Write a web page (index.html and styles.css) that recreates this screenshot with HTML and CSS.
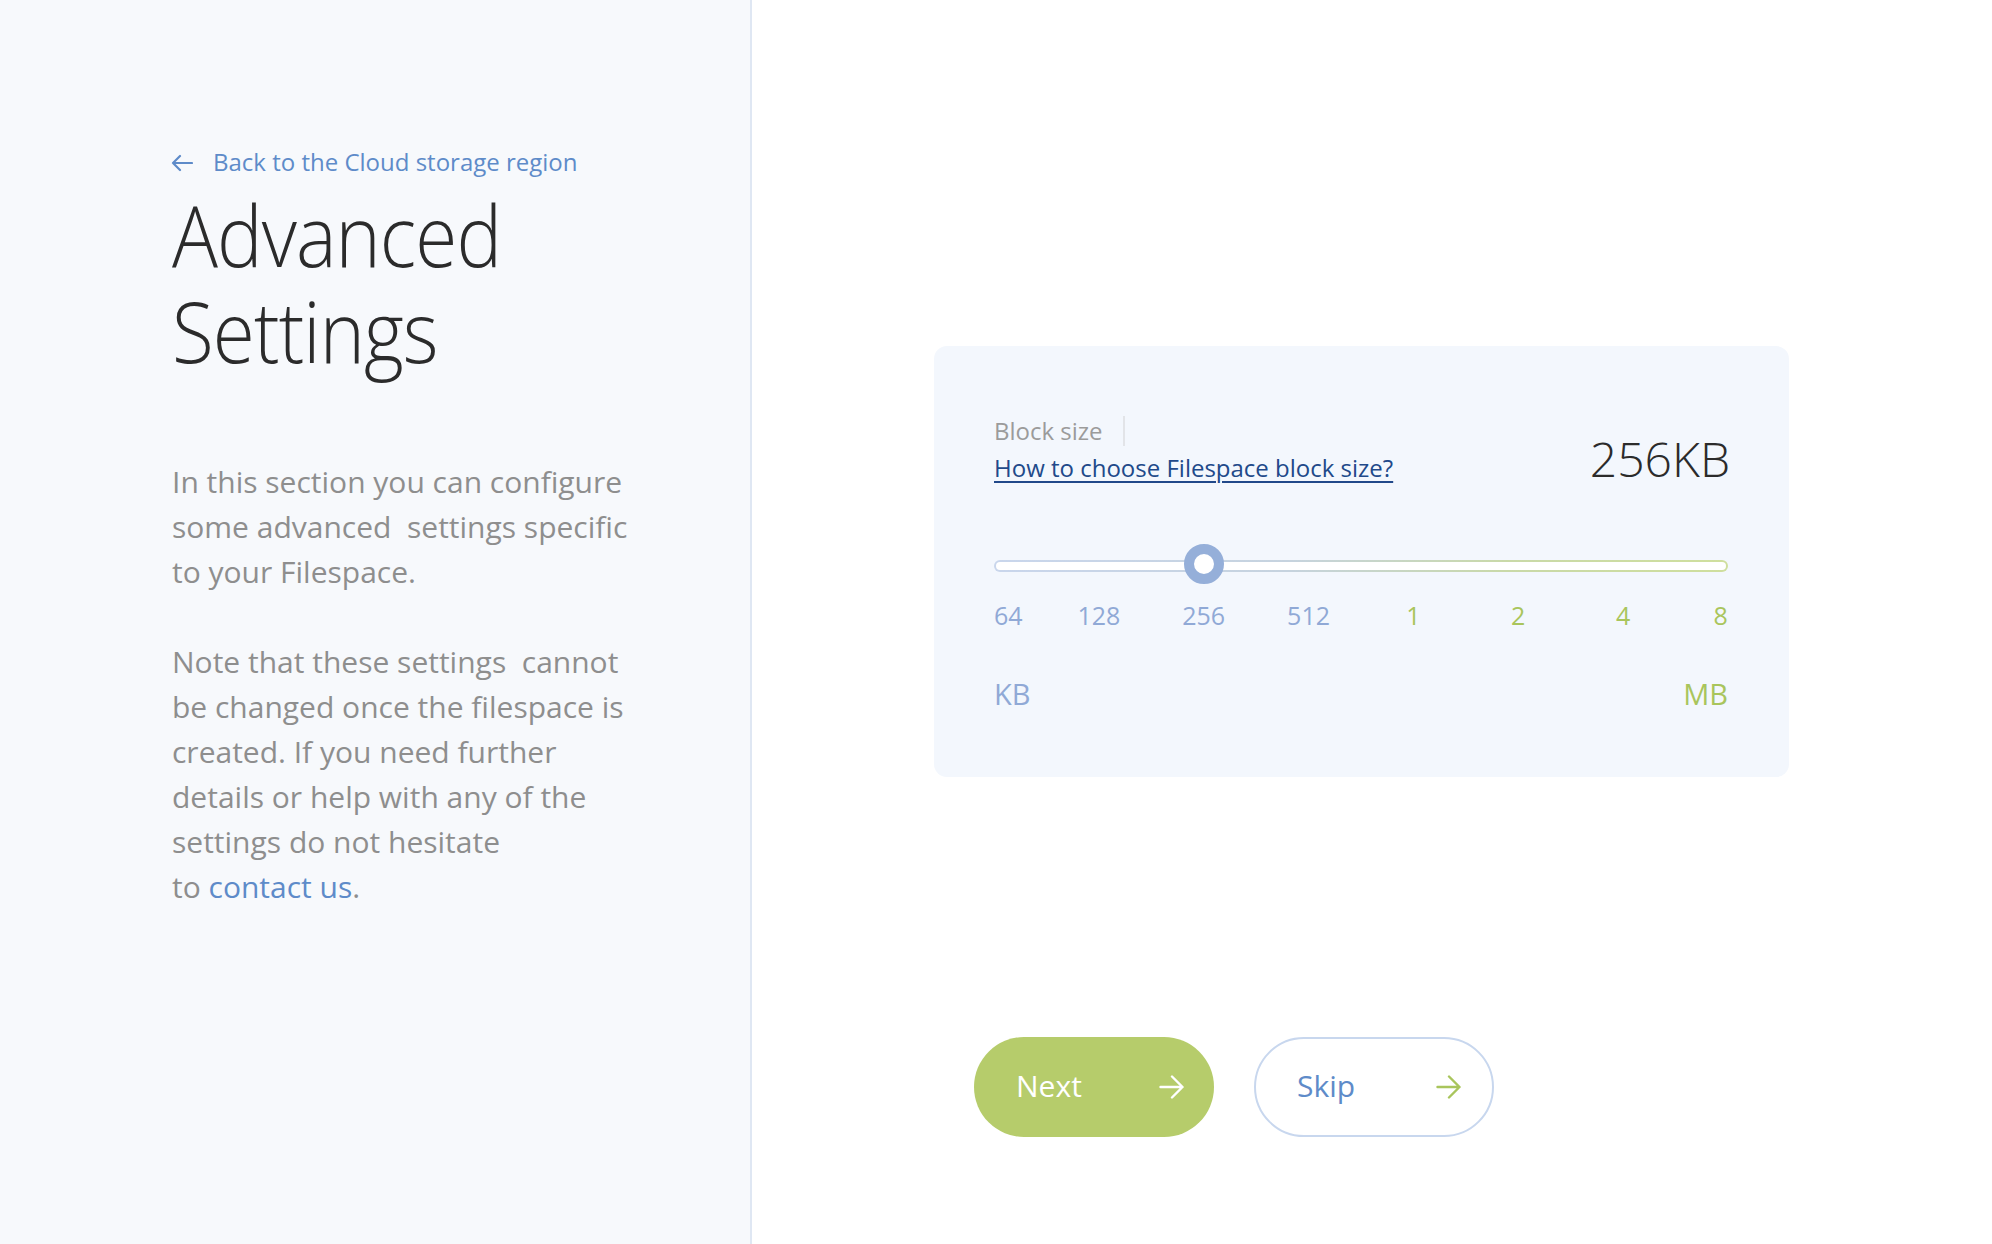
FILE: index.html
```html
<!DOCTYPE html>
<html lang="en">
<head>
<meta charset="utf-8">
<title>Advanced Settings</title>
<link rel="stylesheet" href="styles.css">
</head>
<body>
<div class="page">
  <aside class="side">
    <a class="back" href="#">
      <svg class="back-icon" width="22" height="18" viewBox="0 0 22 18" fill="none" stroke="currentColor" stroke-width="2.2" stroke-linecap="round" stroke-linejoin="round"><path d="M21 9H2M9 2L2 9l7 7"/></svg>
      <span>Back to the Cloud storage region</span>
    </a>
    <h1 class="title">Advanced<br>Settings</h1>
    <p class="text">In this section you can configure<br>some advanced&nbsp; settings specific<br>to your Filespace.</p>
    <p class="text">Note that these settings&nbsp; cannot<br>be changed once the filespace is<br>created. If you need further<br>details or help with any of the<br>settings do not hesitate<br>to <a class="inline-link" href="#">contact us</a>.</p>
  </aside>
  <main class="main">
    <section class="card">
      <div class="card-head">
        <div class="head-left">
          <div class="label-row"><span class="label">Block size</span><span class="divider"></span></div>
          <a class="help" href="#">How to choose Filespace block size?</a>
        </div>
        <div class="value">256KB</div>
      </div>
      <div class="slider">
        <div class="track"><div class="track-inner"></div></div>
        <div class="thumb" style="left: 28.571%"></div>
      </div>
      <div class="ticks">
        <span class="tick kb first"><span>64</span></span>
        <span class="tick kb"><span>128</span></span>
        <span class="tick kb"><span>256</span></span>
        <span class="tick kb"><span>512</span></span>
        <span class="tick mb"><span>1</span></span>
        <span class="tick mb"><span>2</span></span>
        <span class="tick mb"><span>4</span></span>
        <span class="tick mb last"><span>8</span></span>
      </div>
      <div class="units">
        <span class="unit kb">KB</span>
        <span class="unit mb">MB</span>
      </div>
    </section>
    <div class="actions">
      <button class="btn btn-next" type="button">
        <span>Next</span>
        <svg width="26" height="24" viewBox="0 0 26 24" fill="none" stroke="currentColor" stroke-width="2.4" stroke-linecap="round" stroke-linejoin="round"><path d="M1.5 12h22M13 1.5L23.5 12 13 22.5"/></svg>
      </button>
      <button class="btn btn-skip" type="button">
        <span>Skip</span>
        <svg width="26" height="24" viewBox="0 0 26 24" fill="none" stroke="currentColor" stroke-width="2.4" stroke-linecap="round" stroke-linejoin="round"><path d="M1.5 12h22M13 1.5L23.5 12 13 22.5"/></svg>
      </button>
    </div>
  </main>
</div>
</body>
</html>
```

FILE: styles.css
```css
* { box-sizing: border-box; }
html, body { margin: 0; padding: 0; }
body {
  font-family: "Open Sans", "Noto Sans", sans-serif;
  background: #ffffff;
  color: #2b2b2b;
}
.page {
  display: flex;
  min-height: 1244px;
}
.side {
  width: 752px;
  flex: none;
  background: #f7f9fc;
  border-right: 2px solid #dfe7f3;
  padding: 144px 0 0 172px;
}
.back {
  display: flex;
  align-items: center;
  gap: 20px;
  color: #5e8bc9;
  text-decoration: none;
  font-size: 24px;
  line-height: 36px;
}
.back-icon { flex: none; margin-top: 2px; margin-left: -1px; }
.title {
  margin: 6px 0 0;
  font-weight: 300;
  font-size: 85px;
  line-height: 96px;
  color: #2b2b2b;
  letter-spacing: -1px;
  transform: scaleX(0.9);
  transform-origin: left top;
}
.text {
  margin: 0;
  font-size: 30px;
  line-height: 45px;
  color: #8e8e8e;
  white-space: nowrap;
}
.title + .text { margin-top: 81px; }
.text + .text { margin-top: 45px; }
.inline-link {
  color: #5e8bc9;
  text-decoration: none;
}
.main {
  flex: 1;
  padding: 346px 0 0 182px;
}
.card {
  width: 855px;
  background: #f3f7fd;
  border-radius: 13px;
  padding: 66px 61px 62px 60px;
}
.card-head {
  display: flex;
  justify-content: space-between;
  align-items: flex-end;
}
.head-left {
  display: flex;
  flex-direction: column;
}
.label-row {
  display: flex;
  align-items: center;
  height: 37px;
}
.label {
  font-size: 24px;
  line-height: 37px;
  color: #9b9b9b;
}
.divider {
  width: 2px;
  height: 30px;
  background: #e2e4e8;
  margin-left: 20px;
}
.help {
  font-size: 24px;
  line-height: 37px;
  color: #21498a;
  text-decoration: underline;
  text-underline-offset: 4px;
  text-decoration-thickness: 2px;
}
.value {
  font-size: 48px;
  line-height: 55px;
  font-weight: 300;
  color: #2b2b2b;
  margin-right: -2px;
}
.slider {
  position: relative;
  height: 40px;
  margin-top: 58px;
  padding-top: 16px;
}
.track {
  height: 12px;
  border-radius: 6px;
  padding: 2px;
  background: linear-gradient(90deg, #c9d6ec 0%, #c6d3df 40%, #c9d9a8 70%, #cfdf9e 100%);
}
.track-inner {
  height: 8px;
  border-radius: 4px;
  background: #ffffff;
}
.thumb {
  position: absolute;
  top: 0;
  width: 40px;
  height: 40px;
  margin-left: -20px;
  border-radius: 50%;
  border: 10px solid #95afd9;
  background: #ffffff;
}
.ticks {
  display: flex;
  justify-content: space-between;
  margin-top: 13px;
  height: 36px;
}
.tick {
  width: 0;
  display: flex;
  justify-content: center;
  font-size: 25px;
  line-height: 36px;
  white-space: nowrap;
}
.tick.first { justify-content: flex-start; }
.tick.last { justify-content: flex-end; }
.tick.kb { color: #90a9d6; }
.tick.mb { color: #a9c55c; }
.units {
  display: flex;
  justify-content: space-between;
  margin-top: 39px;
}
.unit {
  font-size: 29px;
  line-height: 43px;
}
.unit.kb { color: #90a9d6; }
.unit.mb { color: #a9c55c; }
.actions {
  display: flex;
  gap: 40px;
  margin: 260px 0 0 40px;
}
.btn {
  width: 240px;
  height: 100px;
  border-radius: 50px;
  display: flex;
  align-items: center;
  justify-content: space-between;
  font-family: "Open Sans", "Noto Sans", sans-serif;
  font-size: 30px;
  cursor: pointer;
}
.btn-next {
  background: #b6cc6b;
  border: none;
  color: #ffffff;
  padding: 0 29px 0 42px;
}
.btn-skip {
  background: #ffffff;
  border: 2px solid #c8d7ee;
  color: #5e8bc9;
  padding: 0 30px 0 41px;
}
.btn-skip svg { color: #a9c55c; }
.btn span { line-height: 1; margin-top: -2px; }
```
